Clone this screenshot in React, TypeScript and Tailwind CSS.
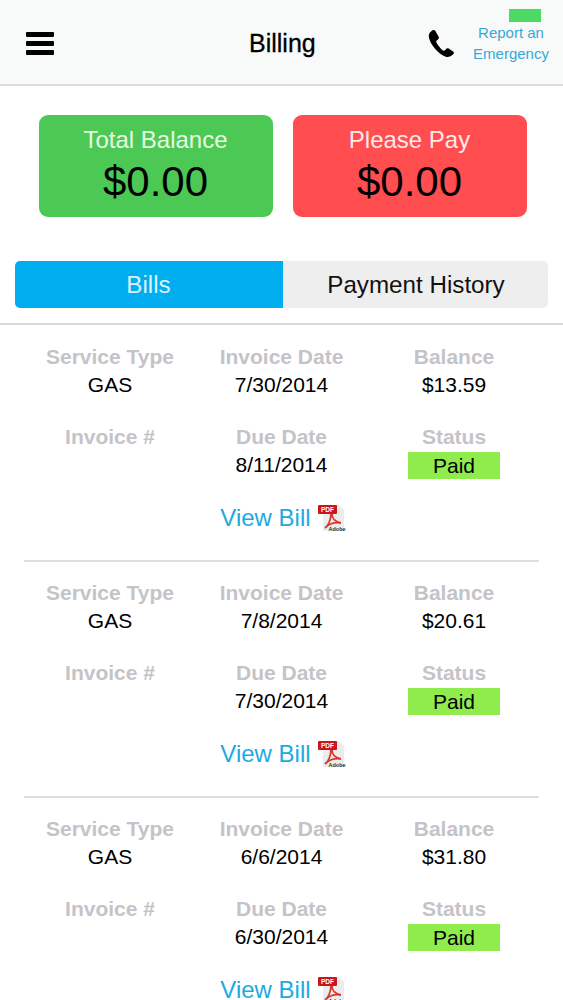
import React from 'react';

const bills = [
  { invoiceDate: '7/30/2014', balance: '$13.59', dueDate: '8/11/2014' },
  { invoiceDate: '7/8/2014', balance: '$20.61', dueDate: '7/30/2014' },
  { invoiceDate: '6/6/2014', balance: '$31.80', dueDate: '6/30/2014' },
];

const PhoneIcon = () => (
  <svg viewBox="0 0 30 30" className="w-[30px] h-[30px]">
    <path
      d="M6.2 1.6 C4 3 2.6 5 2.8 7.6 C3.2 11.6 5.8 16 9 19.8 C12.4 23.6 16.6 27 20.4 27.9 C22.6 28.4 25 27.4 27.6 24.8 C28.2 24.1 28.1 23.3 27.4 22.8 L22.7 19.5 C22 19 21.3 19.1 20.7 19.6 L18.8 21.3 C18.2 21.8 17.6 21.8 17 21.4 C14.8 19.8 11.6 16 10.3 13.2 C10 12.5 10.1 12 10.7 11.5 L12.4 9.9 C13 9.3 13.1 8.7 12.8 8 L9.4 2 C8.8 1 7.4 0.8 6.2 1.6 Z"
      fill="#000"
    />
  </svg>
);

const PdfIcon = () => (
  <svg viewBox="0 0 28 28" className="w-[28px] h-[28px]">
    <path d="M5 1 H21 L26 6 V27 H5 Z" fill="#ececec" />
    <path
      d="M7 24 C10 22 13 16 13 10 C13 8 14 8 14 10 C14 14 17 18 23 19 C17 18 11 20 7 24 Z"
      fill="none"
      stroke="#d8362a"
      strokeWidth="1.8"
    />
    <rect x="0" y="1" width="19" height="9" rx="1" fill="#c8161d" />
    <text x="9.5" y="8" textAnchor="middle" fontSize="6.5" fontWeight="700" fill="#fff" fontFamily="Liberation Sans">
      PDF
    </text>
    <text x="19" y="26.5" textAnchor="middle" fontSize="5.5" fontWeight="700" fill="#333" fontFamily="Liberation Sans">
      Adobe
    </text>
  </svg>
);

const Cell = ({ label, value, width }: { label: string; value?: string; width: string }) => (
  <div className={`${width} shrink-0 flex flex-col items-center`}>
    <span className="text-[21px] leading-[28px] font-bold text-[#c4c4c8]">{label}</span>
    {value && <span className="text-[21px] leading-[28px] text-black">{value}</span>}
  </div>
);

const BillRow = ({ invoiceDate, balance, dueDate }: (typeof bills)[number]) => (
  <div className="mx-6 h-[236px] border-b-2 border-[#dedee0] pt-[17px]">
    <div className="flex">
      <Cell label="Service Type" value="GAS" width="w-[172px]" />
      <Cell label="Invoice Date" value={invoiceDate} width="w-[171px]" />
      <Cell label="Balance" value={balance} width="w-[172px] ml-[1px]" />
    </div>
    <div className="flex mt-[24px]">
      <Cell label="Invoice #" width="w-[172px]" />
      <Cell label="Due Date" value={dueDate} width="w-[171px]" />
      <div className="w-[172px] ml-[1px] shrink-0 flex flex-col items-center">
        <span className="text-[21px] leading-[28px] font-bold text-[#c4c4c8]">Status</span>
        <span className="w-[92px] h-[27px] mt-[1px] bg-[#8fec4c] text-black text-[21px] leading-[27px] text-center">Paid</span>
      </div>
    </div>
    <div className="flex items-center justify-center gap-[7px] mt-[22px] pl-[3px]">
      <span className="text-[24px] leading-[34px] text-[#1eaadf]">View Bill</span>
      <PdfIcon />
    </div>
  </div>
);

export default function App() {
  return (
    <div className="w-[563px] h-[1000px] overflow-hidden bg-white font-['Liberation_Sans',Arial,sans-serif]">
      <header className="relative h-[86px] bg-[#f8f9f9] border-b-2 border-[#dcdcde] flex items-center pl-[26px] pr-[14px] pt-[3px]">
        <div className="w-[28px] flex flex-col gap-[4px]">
          <span className="h-[5px] bg-black rounded-[1px]" />
          <span className="h-[5px] bg-black rounded-[1px]" />
          <span className="h-[5px] bg-black rounded-[1px]" />
        </div>
        <h1 className="ml-[195px] text-[25px] font-normal text-black [-webkit-text-stroke:0.3px_black]">Billing</h1>
        <div className="ml-auto mr-[17px]">
          <PhoneIcon />
        </div>
        <div className="w-[76px] text-center text-[15px] leading-[21px] text-[#35a9d8] pb-[1px] whitespace-nowrap">
          <div>Report an</div>
          <div>Emergency</div>
        </div>
        <span className="absolute top-[9px] left-[509px] w-[32px] h-[13px] bg-[#4cd964]" />
      </header>

      <div className="flex justify-center gap-[20px] pt-[29px] pl-[2px]">
        <div className="w-[234px] h-[102px] rounded-[9px] bg-[#4cc854] flex flex-col items-center pt-[8px]">
          <span className="text-[24px] leading-[34px] text-[#e6fbe2]">Total Balance</span>
          <span className="text-[42px] leading-[50px] text-black">$0.00</span>
        </div>
        <div className="w-[234px] h-[102px] rounded-[9px] bg-[#ff4d50] flex flex-col items-center pt-[8px]">
          <span className="text-[24px] leading-[34px] text-[#ffeaea]">Please Pay</span>
          <span className="text-[42px] leading-[50px] text-black">$0.00</span>
        </div>
      </div>

      <div className="flex mx-[15px] mt-[44px] h-[47px] rounded-[5px] overflow-hidden text-[24.2px]">
        <div className="w-[268px] bg-[#00aeef] text-[#d8f3ff] flex items-center justify-center pr-[1px] pt-[1px]">Bills</div>
        <div className="flex-1 bg-[#eeeeef] text-[#111] flex items-center justify-center pl-[1px] pt-[1px]">Payment History</div>
      </div>

      <div className="mt-[15px] border-t-2 border-[#d8d8da] pt-[1px]">
        {bills.map((bill) => (
          <BillRow key={bill.invoiceDate} {...bill} />
        ))}
      </div>
    </div>
  );
}
